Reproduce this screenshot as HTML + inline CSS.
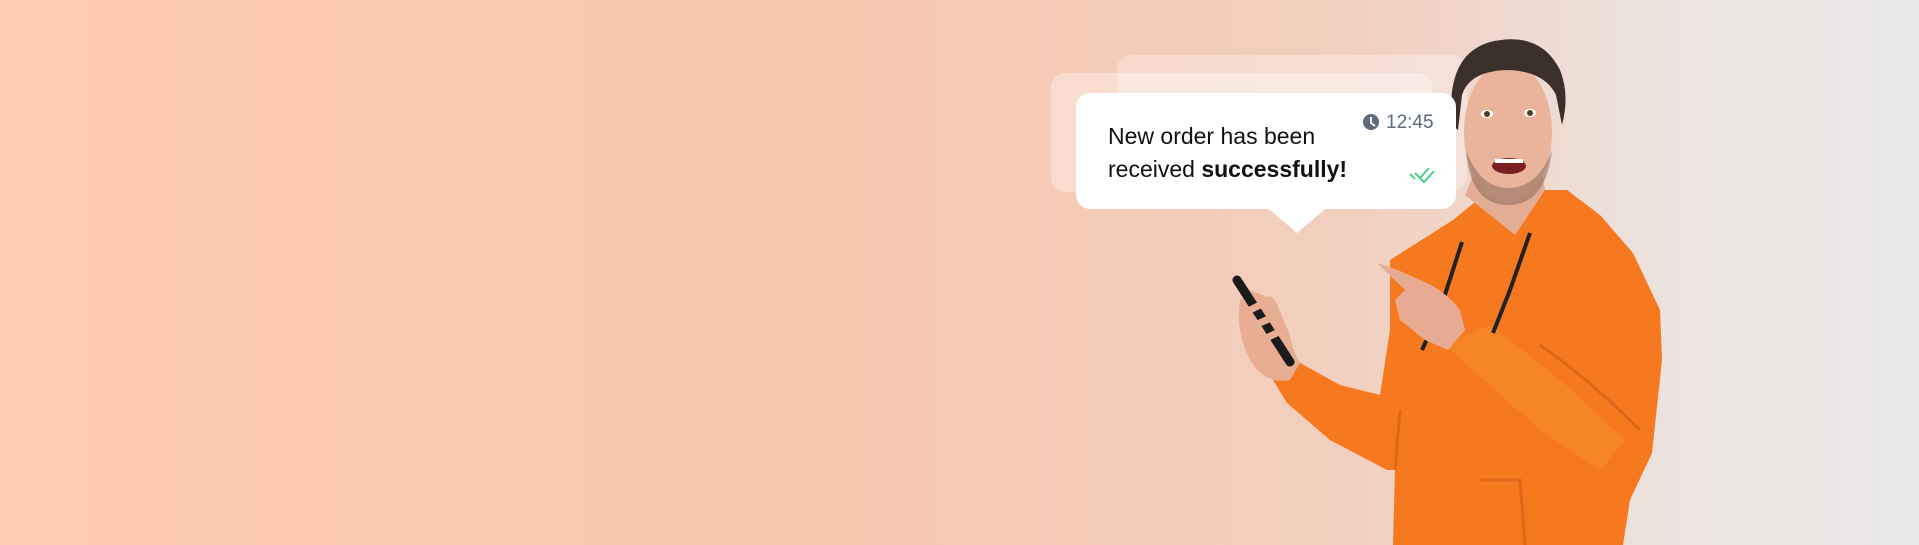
<!DOCTYPE html>
<html><head><meta charset="utf-8"><style>
html,body{margin:0;padding:0}
body{width:1919px;height:545px;overflow:hidden;position:relative;background:linear-gradient(90deg,#fecbb1 0%,#f8c6ae 40%,#f2cfbe 70%,#ebe4e0 88%,#e9e8e8 100%);font-family:"Liberation Sans",sans-serif}
.card{position:absolute;border-radius:14px}
</style></head><body>
<div class="card" style="left:1117px;top:55px;width:350px;height:135px;background:rgba(255,255,255,0.3)"></div>
<div class="card" style="left:1051px;top:73px;width:381px;height:119px;background:rgba(255,255,255,0.35)"></div>
<svg style="position:absolute;left:0;top:0" width="1919" height="545">
<path d="M1453,220 L1490,190 L1567,190 L1600,215 L1633,253 L1660,310 L1662,360 L1652,453 L1630,500 L1623,545 L1393,545 L1395,470 L1387,470 L1330,440 L1287,403 L1273,380 L1300,363 L1340,385 L1380,395 L1390,330 L1390,260 Z" fill="#f7791f"/>
<path d="M1395,470 L1400,410 M1480,480 L1520,480 L1525,545 M1540,345 Q1590,380 1640,430" stroke="#e0661a" stroke-width="3" fill="none"/>
<path d="M1445,345 L1490,325 L1560,380 L1625,440 L1600,470 L1540,430 Z" fill="#f48424"/>
<path d="M1465,195 L1480,160 L1540,160 L1545,190 L1515,235 Z" fill="#e3ad95"/>
<path d="M1462,242 L1440,310 L1422,350 M1530,233 L1510,290 L1493,333" stroke="#222" stroke-width="4" fill="none"/>
<ellipse cx="1508" cy="132" rx="44" ry="70" fill="#eab39c"/>
<path d="M1452,125 Q1445,55 1490,42 Q1540,30 1560,70 Q1570,95 1562,125 L1556,95 Q1545,72 1510,70 Q1470,70 1462,95 L1458,130 Z" fill="#3b2f2a"/>
<path d="M1466,150 Q1470,205 1508,205 Q1546,205 1552,150 Q1538,188 1508,188 Q1480,188 1466,150Z" fill="#8a6a5a" opacity="0.55"/>
<ellipse cx="1487" cy="114" rx="6" ry="4" fill="#fff"/><circle cx="1487" cy="114" r="3" fill="#5a3a20"/>
<ellipse cx="1530" cy="113" rx="6" ry="4" fill="#fff"/><circle cx="1530" cy="113" r="3" fill="#5a3a20"/>
<ellipse cx="1509" cy="166" rx="17" ry="8" fill="#7a1f1f"/><rect x="1495" y="159" width="28" height="4" fill="#fff"/>
<path d="M1240,300 Q1235,330 1250,360 Q1265,385 1290,380 L1300,363 Q1292,350 1290,335 L1275,300 L1250,290 Z" fill="#e7ae93"/>
<path d="M1237,280 L1290,362" stroke="#1b1b1b" stroke-width="9" stroke-linecap="round"/>
<path d="M1250,310 L1270,300 M1255,325 L1278,315 M1262,340 L1283,330" stroke="#e7ae93" stroke-width="7" stroke-linecap="round"/>
<path d="M1377,263 Q1395,268 1420,280 Q1445,290 1460,310 L1465,330 L1448,350 L1425,340 L1400,320 L1395,300 L1405,290 Z" fill="#e6ab92"/>
</svg>
<svg style="position:absolute;left:1076px;top:93px" width="380" height="141">
<path d="M14,0 H366 A14,14 0 0 1 380,14 V102 A14,14 0 0 1 366,116 H249 L221,140 L193,116 H14 A14,14 0 0 1 0,102 V14 A14,14 0 0 1 14,0Z" fill="#fff"/>
<circle cx="295" cy="29" r="8" fill="#5d6b7a"/>
<path d="M295,24 V30 L299,33" stroke="#fff" stroke-width="2" fill="none"/>
<path d="M334,81 L339,86 M339,80 L344,85 L353,75 M344,85 L348,89 L358,78" stroke="#4ccf8f" stroke-width="2" fill="none"/>
</svg>
<div style="position:absolute;left:1386px;top:112px;font-size:19px;color:#5d6b7a">12:45</div>
<div style="position:absolute;left:1108px;top:120px;font-size:23px;line-height:33px;color:#111">New order has been<br>received <b>successfully!</b></div>
</body></html>
